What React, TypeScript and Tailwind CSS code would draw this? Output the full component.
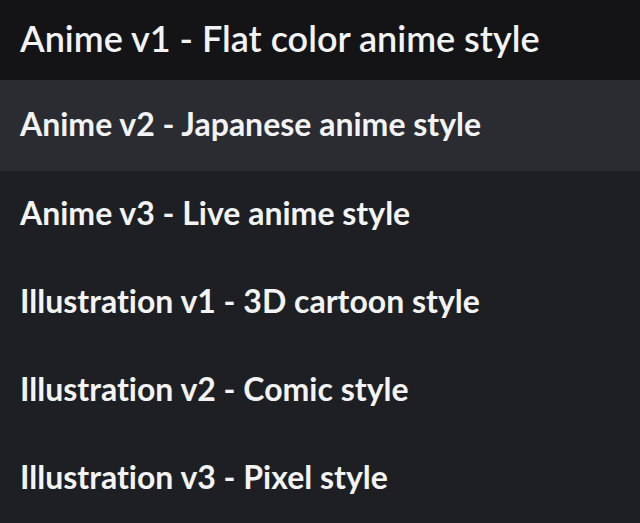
const options = [
  "Anime v2 - Japanese anime style",
  "Anime v3 - Live anime style",
  "Illustration v1 - 3D cartoon style",
  "Illustration v2 - Comic style",
  "Illustration v3 - Pixel style",
];

export default function App() {
  return (
    <div className="flex h-[523px] w-[640px] flex-col overflow-hidden bg-[#1e1f23] font-['Lato',sans-serif] text-[#f2f3f5] [font-variant-ligatures:none]">
      <div className="flex h-[80px] shrink-0 items-center bg-[#141417] pb-[4px] pl-[20px]">
        <span className="text-[36px] font-semibold">Anime v1 - Flat color anime style</span>
      </div>
      <ul className="flex flex-col">
        {options.map((o, i) => (
          <li
            key={o}
            className={
              i === 0
                ? "flex h-[91px] items-center bg-[#2b2c31] pb-[4px] pl-[20px]"
                : "flex h-[88px] items-center pb-[4px] pl-[20px]"
            }
          >
            <span className="text-[32px] font-bold">{o}</span>
          </li>
        ))}
      </ul>
    </div>
  );
}
